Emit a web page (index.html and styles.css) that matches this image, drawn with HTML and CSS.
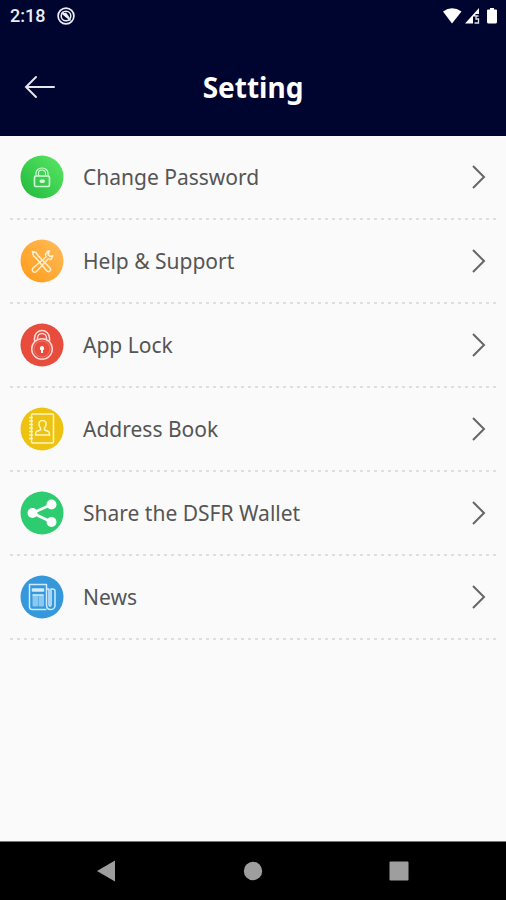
FILE: index.html
```
<!DOCTYPE html>
<html lang="en">
<head>
<meta charset="utf-8">
<meta name="viewport" content="width=device-width, initial-scale=1">
<title>Setting</title>
<link rel="stylesheet" href="styles.css">
</head>
<body>
<div class="status">
  <span class="time">2:18</span>
  <svg class="notice" width="18" height="18" viewBox="0 0 18 18" fill="none" stroke="#eceef6"><circle cx="9" cy="9" r="7.9" stroke-width="1.7"/><circle cx="9" cy="9" r="4.8" stroke-width="1.5"/><path d="M5 7 9 5.500l4 5.500-4-.5z" fill="#eceef6" stroke="none"/><path d="m5 5 8.500 8.500" stroke-width="1.700"/></svg>
  <svg class="signals" width="56" height="18" viewBox="0 0 56 18" fill="#fff"><path d="M1 4.500Q10-2 19.500 4.500L10 16.500z"/><path d="M37 1v6h-3.500v2.500H31v7h-8z"/><path d="M36.500 9h-2.500v3h2.500v4h-4" fill="none" stroke="#dfe1ec" stroke-width="1.300"/><path d="M48 1h4v1.500h2q1 0 1 1V15q0 1.500-1.500 1.500h-7Q45 16.500 45 15V3.500q0-1 1-1h2z"/></svg>
</div>
<header class="header">
  <button class="back" aria-label="Back"><svg width="32" height="24" viewBox="0 0 32 24" fill="none" stroke="#e4e5ef" stroke-width="2" stroke-linecap="round"><path d="M2 12h28M12 2 2 12l10 10"/></svg></button>
  <h1>Setting</h1>
</header>
<main>
  <ul class="list">
    <li><a class="row" href="#password">
      <svg class="icon" viewBox="0 0 44 44" fill="none" stroke="#d3fcd8"><defs><linearGradient id="green" x1="1" y1="0" x2="0" y2="1"><stop stop-color="#5ce865"/><stop offset="1" stop-color="#1fb83c"/></linearGradient></defs><circle cx="22" cy="22" r="21.500" fill="url(#green)" stroke="none"/><rect x="14.500" y="21" width="15" height="10.500" rx="1.500" stroke-width="1.600"/><path d="M16 20.500V18a6 5 0 0 1 12 0v2.500M18.500 20.500V18a3.500 3 0 0 1 7 0v2.500" stroke-width="1.100"/><rect x="20" y="25" width="4.500" height="2.500" rx="1" fill="#d3fcd8"/></svg>
      <span class="label">Change Password</span><svg class="chevron" viewBox="0 0 14 24"><path d="m1 1 11 11L1 23"/></svg></a></li>
    <li><a class="row" href="#help">
      <svg class="icon" viewBox="0 0 44 44" fill="none" stroke="#fff0d2" stroke-width="1.500" stroke-linejoin="round"><defs><linearGradient id="orange" x1="1" y1="0" x2="0" y2="1"><stop stop-color="#ffbc5b"/><stop offset="1" stop-color="#ff9b17"/></linearGradient></defs><circle cx="22" cy="22" r="21.500" fill="url(#orange)" stroke="none"/><path d="m12.500 12.500 3.500 1 2 3 11.500 12q2 2 .5 3.500t-3.500-.5L16 19l-2.500-2z"/><path d="m28 12-2.500 3.500.5 2.500L13 29q-1.500 2 0 3.500t3.500 0L28 20l3 .5 2-4-3 1-2-2 1.500-3.500z"/></svg>
      <span class="label">Help &amp; Support</span><svg class="chevron" viewBox="0 0 14 24"><path d="m1 1 11 11L1 23"/></svg></a></li>
    <li><a class="row" href="#lock">
      <svg class="icon" viewBox="0 0 44 44" fill="none" stroke="#ffd9d5" stroke-width="1.500"><circle cx="22" cy="22" r="21.500" fill="#e74c3c" stroke="none"/><circle cx="22" cy="26" r="10.300"/><circle cx="22" cy="26" r="8" stroke-width=".3"/><path d="M14.500 18.500V15a7.500 7.500 0 0 1 15 0v3.500M17.500 16.500V15a4.500 4.500 0 0 1 9 0v1.500"/><path d="M22 23a2.300 2.300 0 0 1 1 4.300V30h-2v-2.700a2.300 2.300 0 0 1 1-4.300z" fill="#fff" stroke="none"/></svg>
      <span class="label">App Lock</span><svg class="chevron" viewBox="0 0 14 24"><path d="m1 1 11 11L1 23"/></svg></a></li>
    <li><a class="row" href="#addresses">
      <svg class="icon" viewBox="0 0 44 44" fill="none" stroke="#fff5c0" stroke-width="1.500"><circle cx="22" cy="22" r="21.500" fill="#edc211" stroke="none"/><rect x="11.500" y="7" width="22" height="29" rx="1"/><path d="M9 10.500h4m-4 3.500h4m-4 3.500h4m-4 3.500h4m-4 3.500h4m-4 3.500h4m-4 3.500h4"/><path d="M22.500 13.500c-3 0-4 2-3.500 4.500.2 1.500 1 2 1.500 3v2l-4 1.500q-1 .5-1 3.500h14q0-3-1-3.500l-4-1.500v-2c.5-1 1.300-1.500 1.500-3 .5-2.500-.5-4.500-3.500-4.500z"/></svg>
      <span class="label">Address Book</span><svg class="chevron" viewBox="0 0 14 24"><path d="m1 1 11 11L1 23"/></svg></a></li>
    <li><a class="row" href="#share">
      <svg class="icon" viewBox="0 0 44 44" fill="#fff"><circle cx="22" cy="22" r="21.500" fill="#2ecc71"/><path d="M31.500 13.500 12.500 22l19 9" fill="none" stroke="#fff" stroke-width="2.600"/><circle cx="31.500" cy="13.500" r="5"/><circle cx="12.500" cy="22" r="5"/><circle cx="31.500" cy="31" r="5"/></svg>
      <span class="label">Share the DSFR Wallet</span><svg class="chevron" viewBox="0 0 14 24"><path d="m1 1 11 11L1 23"/></svg></a></li>
    <li><a class="row" href="#news">
      <svg class="icon" viewBox="0 0 44 44" fill="none" stroke="#cdeaff" stroke-width="1.500" stroke-linejoin="round"><circle cx="22" cy="22" r="21.500" fill="#3498db" stroke="none"/><path d="M26.500 34.500H12q-2.500 0-2.500-3v-22h17V30q0 4.500 4 4.500t4.500-3.500V16q0-2-2.500-2h-1.500v15.500q0 1.500-1 1.500t-1-1.500V14h-2"/><path d="M12.500 14h11v2h-11z" fill="#e5f5ff"/><path d="M13 20h4.500v11H13zm6 0h4.500v11H19z" fill="#8dc7ef" stroke="#8dc7ef" stroke-width="1"/><path d="M12.500 20h11"/></svg>
      <span class="label">News</span><svg class="chevron" viewBox="0 0 14 24"><path d="m1 1 11 11L1 23"/></svg></a></li>
  </ul>
</main>
<nav class="nav" aria-label="System">
  <button aria-label="Back"><svg width="20" height="22" viewBox="0 0 20 22"><path d="M0 11 18 .500v21z"/></svg></button>
  <button aria-label="Home"><svg width="20" height="20" viewBox="0 0 20 20"><circle cx="10" cy="10" r="9.200"/></svg></button>
  <button aria-label="Recent apps"><svg width="20" height="20" viewBox="0 0 20 20"><rect x=".500" y=".500" width="19" height="19" rx="1"/></svg></button>
</nav>
</body>
</html>
```
FILE: styles.css
```
* { box-sizing: border-box; }
body {
  margin: 0;
  min-height: 100vh;
  display: flex;
  flex-direction: column;
  background: #fafafa;
  color: #555;
  font-family: "Noto Sans", "Open Sans", sans-serif;
}
button { border: 0; padding: 0; background: none; display: grid; place-items: center; }
svg { display: block; flex: none; }
.status {
  display: flex;
  align-items: center;
  height: 32px;
  padding: 0 8px 0 10px;
  background: #00052f;
  color: #eceef6;
}
.time { font: 500 18px/32px Roboto, sans-serif; }
.notice { margin-left: 12px; }
.signals { margin-left: auto; }
.header {
  display: grid;
  grid-template-columns: 32px 1fr 32px;
  align-items: center;
  height: 104px;
  padding: 5px 24px 0;
  background: #00052f;
  color: #fff;
}
.header h1 { margin: 0; text-align: center; font-size: 28px; line-height: 40px; font-weight: 700; }
main { flex: 1; }
.list { list-style: none; margin: 0; padding: 0 9px 0 10px; }
.row {
  display: flex;
  align-items: center;
  height: 84px;
  padding: 0 11px 2px 10px;
  color: inherit;
  text-decoration: none;
  background: repeating-linear-gradient(90deg, #dedede 0 3px, transparent 3px 7px) left bottom / 100% 2px no-repeat;
}
.icon { width: 44px; height: 44px; }
.label { flex: 1; margin-left: 19px; font-size: 21px; line-height: 32px; }
.chevron { width: 14px; height: 24px; fill: none; stroke: #666; stroke-width: 2; }
.nav {
  display: grid;
  grid-template-columns: repeat(3, 1fr);
  height: 59px;
  padding: 0 34px;
  background: #000;
  border-top: 1px solid #777;
}
.nav svg { fill: #9e9e9e; }
```
